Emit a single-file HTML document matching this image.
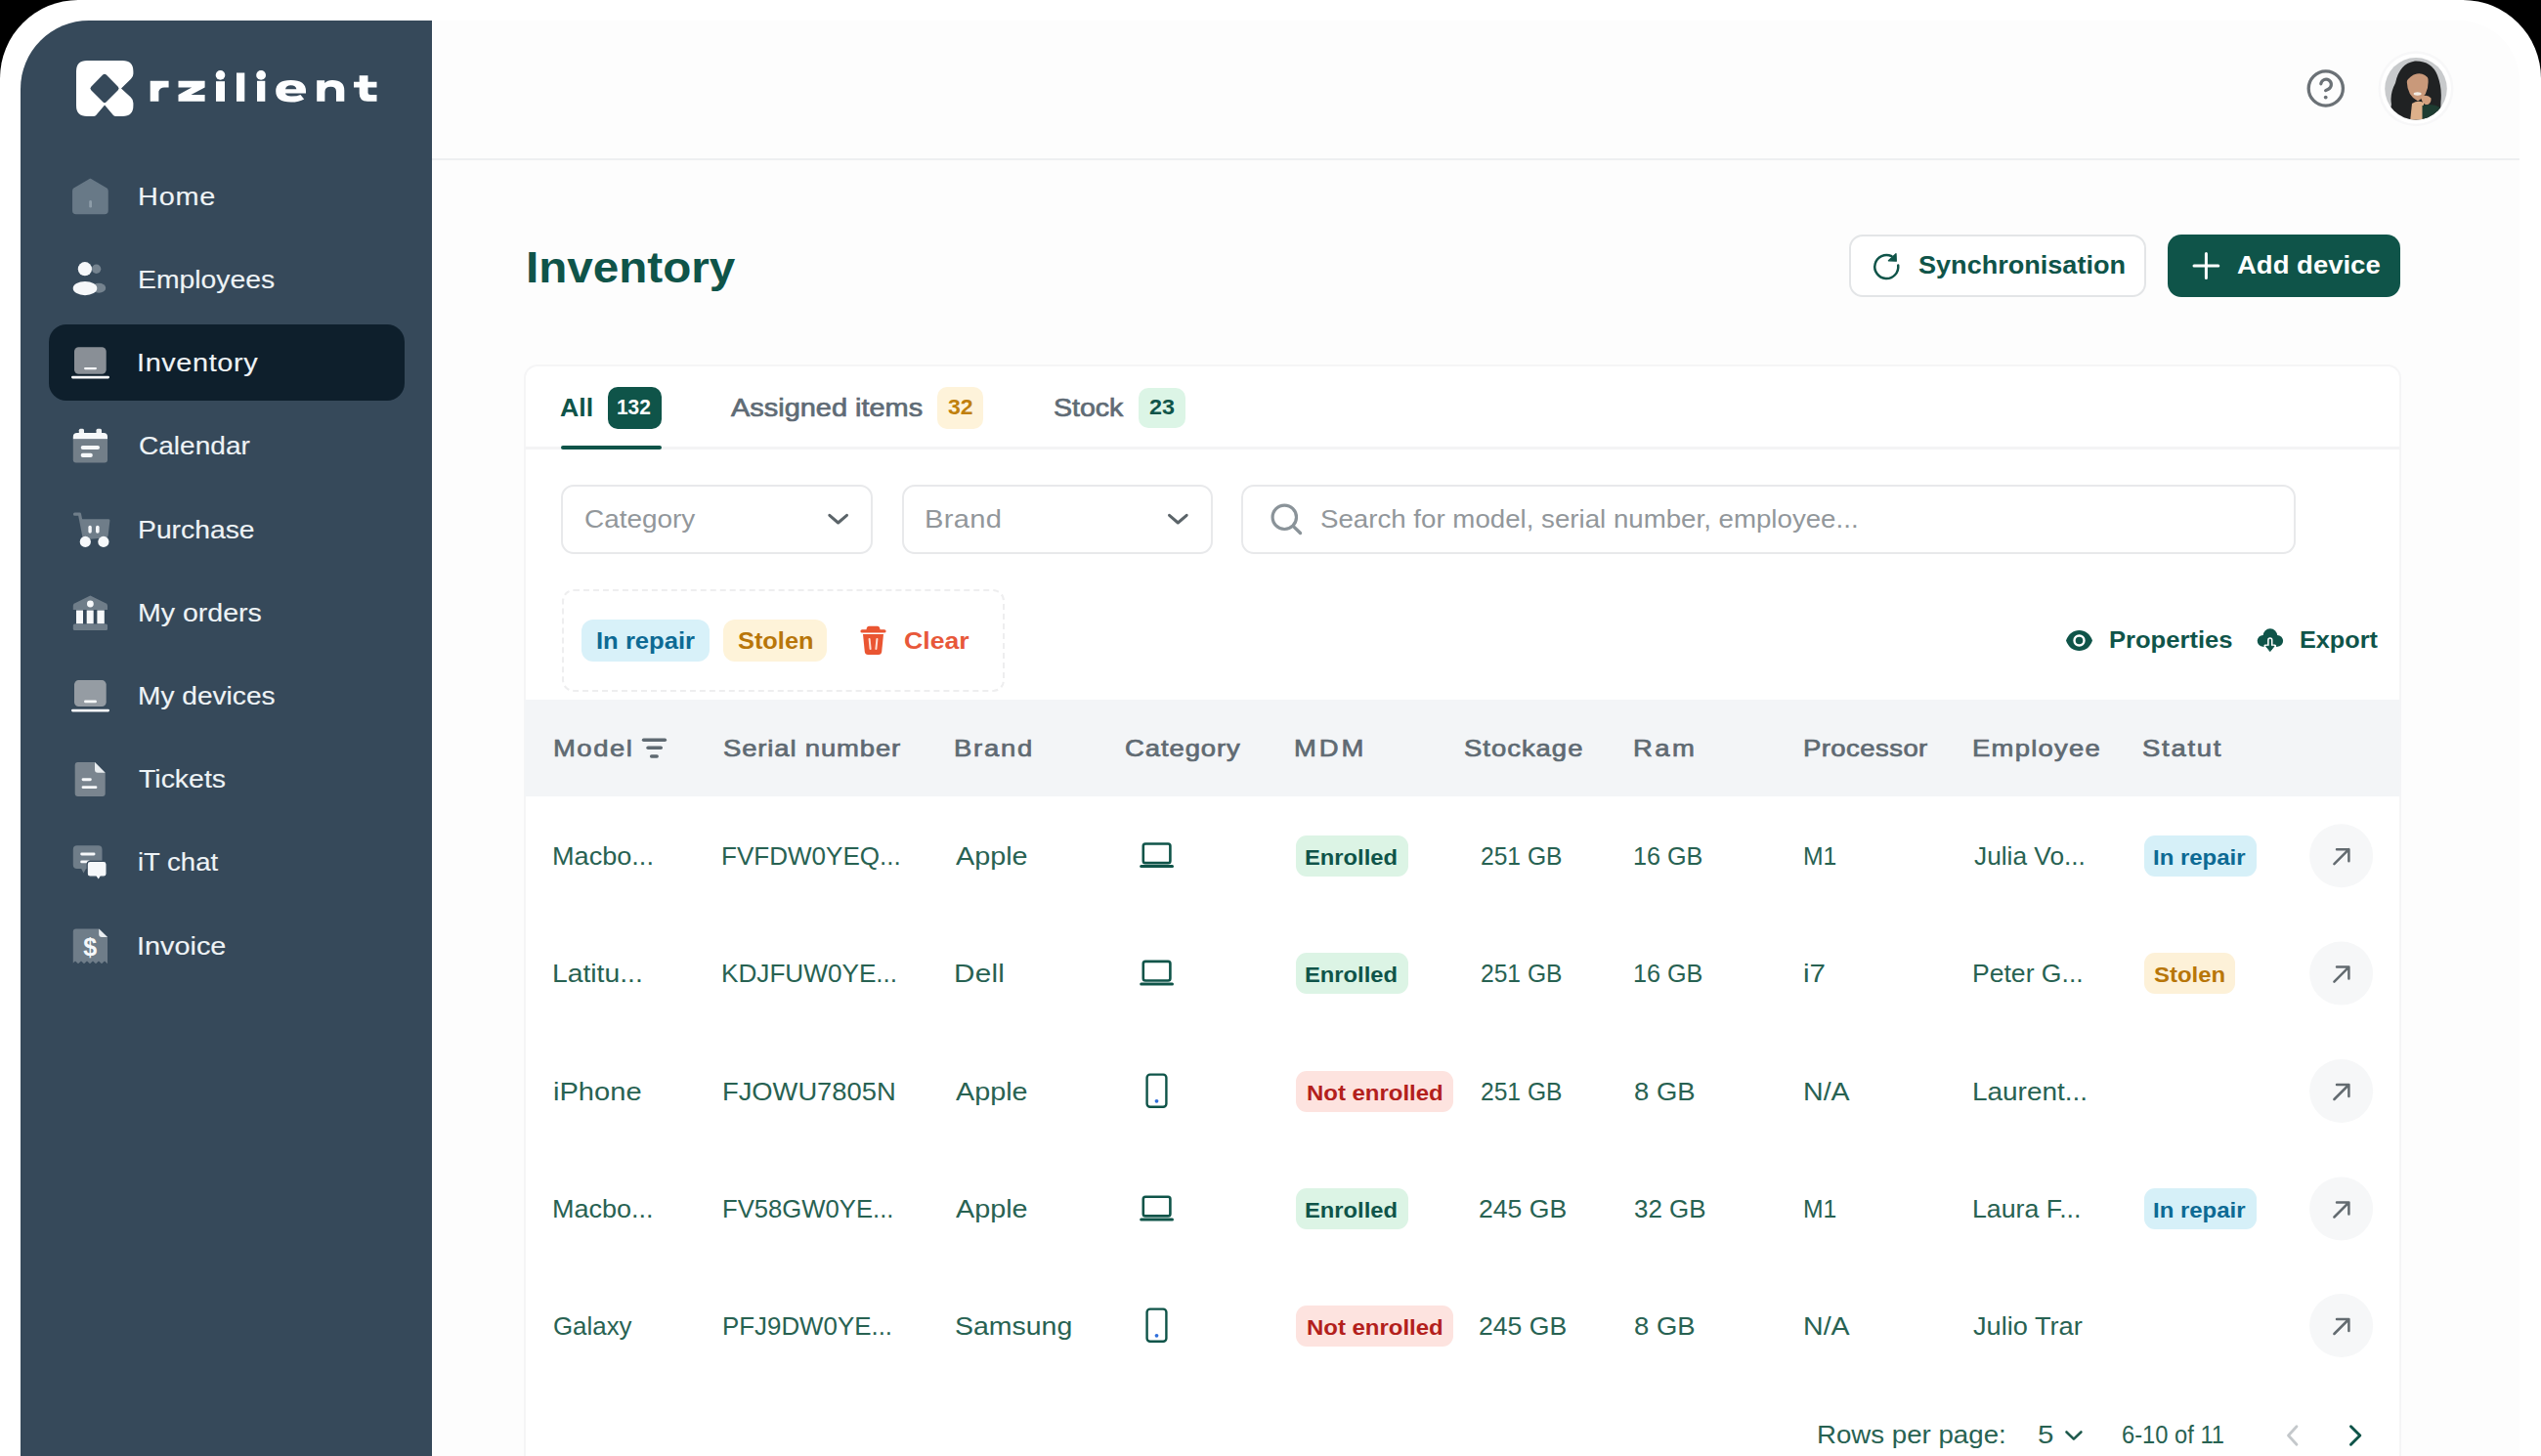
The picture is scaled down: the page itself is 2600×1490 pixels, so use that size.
<!DOCTYPE html>
<html><head><meta charset="utf-8">
<style>
*{margin:0;padding:0;box-sizing:border-box}
html,body{width:2600px;height:1490px;overflow:hidden;background:#000}
body{font-family:"Liberation Sans",sans-serif;position:relative}
.abs{position:absolute}
.t{position:absolute;white-space:nowrap;line-height:1}
svg{position:absolute;overflow:visible}
</style></head>
<body>
<div class="abs" style="left:0;top:0;width:2600px;height:1490px;background:#fff;border-radius:80px 80px 0 0"></div>
<div class="abs" style="left:21px;top:21px;width:421px;height:1469px;background:#36495a;border-radius:70px 0 0 0"></div>
<div class="abs" style="left:442px;top:21px;width:2136px;height:1469px;background:#fdfdfd;border-radius:0 62px 0 0"></div>

<!-- active nav -->
<div class="abs" style="left:50px;top:332px;width:364px;height:78px;background:#0e1f2c;border-radius:18px"></div>

<!-- header line -->
<div class="abs" style="left:442px;top:161.5px;width:2136px;height:2px;background:#eeeff1"></div>

<!-- buttons -->
<div class="abs" style="left:1892px;top:240px;width:304px;height:64px;border:2px solid #e3e5e7;border-radius:14px;background:#fff"></div>
<div class="abs" style="left:2218px;top:240px;width:238px;height:64px;border-radius:14px;background:#0f5449"></div>

<!-- card -->
<div class="abs" style="left:536px;top:373px;width:1921px;height:1117px;background:#fff;border:2px solid #f5f5f6;border-bottom:none;border-radius:14px 14px 0 0"></div>
<!-- tab divider -->
<div class="abs" style="left:537px;top:456.5px;width:1919px;height:3.5px;background:#f4f4f5"></div>
<div class="abs" style="left:574px;top:456.2px;width:102.5px;height:4px;background:#0f5449;border-radius:2px"></div>
<!-- tab badges -->
<div class="abs" style="left:621.5px;top:396px;width:55px;height:42.5px;background:#0f5449;border-radius:10px"></div>
<div class="abs" style="left:959px;top:396px;width:47px;height:42.5px;background:#fef3da;border-radius:10px"></div>
<div class="abs" style="left:1165px;top:396.5px;width:47.7px;height:41.5px;background:#dcf5e6;border-radius:10px"></div>

<!-- filter boxes -->
<div class="abs" style="left:574px;top:496px;width:319px;height:71px;border:2px solid #e8e9eb;border-radius:13px;background:#fff"></div>
<div class="abs" style="left:922.6px;top:496px;width:318px;height:71px;border:2px solid #e8e9eb;border-radius:13px;background:#fff"></div>
<div class="abs" style="left:1270px;top:496px;width:1078.5px;height:71px;border:2px solid #e8e9eb;border-radius:13px;background:#fff"></div>

<!-- dashed box -->
<div class="abs" style="left:575px;top:603px;width:452.5px;height:105px;border:2px dashed #eeeeef;border-radius:12px"></div>
<div class="abs" style="left:595.2px;top:634.4px;width:131.2px;height:42.3px;background:#d8f1f9;border-radius:12px"></div>
<div class="abs" style="left:740.4px;top:634.4px;width:106.1px;height:42.3px;background:#fef3d9;border-radius:12px"></div>

<!-- table header -->
<div class="abs" style="left:537px;top:715.6px;width:1919px;height:99.4px;background:#f3f5f7"></div>

<div class="abs" style="left:1326px;top:854.7px;width:115px;height:42px;background:#dcf4e5;border-radius:11px"></div>
<div class="abs" style="left:2194px;top:854.7px;width:115px;height:42px;background:#d6f0f8;border-radius:11px"></div>
<div class="abs" style="left:1326px;top:975.1px;width:115px;height:42px;background:#dcf4e5;border-radius:11px"></div>
<div class="abs" style="left:2193.5px;top:975.1px;width:93.69999999999982px;height:42px;background:#fdf1d8;border-radius:11px"></div>
<div class="abs" style="left:1325.5px;top:1095.5px;width:161.0px;height:42px;background:#fde3df;border-radius:11px"></div>
<div class="abs" style="left:1326px;top:1216.0px;width:115px;height:42px;background:#dcf4e5;border-radius:11px"></div>
<div class="abs" style="left:2194px;top:1216.0px;width:115px;height:42px;background:#d6f0f8;border-radius:11px"></div>
<div class="abs" style="left:1325.5px;top:1335.5px;width:161.0px;height:42px;background:#fde3df;border-radius:11px"></div>

<svg style="left:0;top:0" width="2600" height="1490" viewBox="0 0 2600 1490">
  <!-- logo -->
  <g transform="translate(72 56)">
    <path d="M6 17 Q6 6 17 6 H53.4 Q64.4 6 64.4 17 V19.5 Q64.4 22.6 62 24.8 L52 34.4 L61.8 43.6 Q64.4 46 64.4 49.5 V52 Q64.4 63 53.4 63 H46.5 Q45 63 44 62 L35.1 51.6 L26.2 62 Q25.2 63 23.7 63 H17 Q6 63 6 52 Z" fill="#fff"/>
    <polygon points="35,22.3 47,34.4 35,46.5 23,34.4" fill="#36495a" stroke="#36495a" stroke-width="5" stroke-linejoin="round"/>
  </g>

  <!-- logo text -->
  <g fill="#fdfeff">
    <path d="M153.7 103.8 V82.8 H172.6 V89.6 H168 Q163.8 89.6 162.4 93.5 V103.8 Z"/>
    <path d="M182.5 82.8 H209.6 V89.4 L195.4 96.9 H209.6 V103.8 H182.5 V96.9 L196.2 89.4 H182.5 Z"/>
    <rect x="221" y="83.2" width="9" height="20.6"/>
    <circle cx="225.5" cy="76.9" r="4.8"/>
    <rect x="242" y="74.5" width="8.3" height="29.3"/>
    <rect x="263" y="82.8" width="8.3" height="21"/>
    <circle cx="267.1" cy="76.9" r="4.9"/>
    <path fill-rule="evenodd" d="M313 95.5 H291.8 Q293 98.5 298 98.5 Q304 98.5 307.5 97 L311.2 101.5 Q306 104.6 297.8 104.6 Q282.2 104.6 282.2 93.3 Q282.2 82 297.6 82 Q313 82 313 93.3 Z M292 91.2 H303.4 Q302.6 87.2 297.7 87.2 Q292.8 87.2 292 91.2 Z"/>
    <path d="M324.2 103.7 V82.2 H332.2 V85 Q335 82 340 82 Q352.3 82 352.3 92.5 V103.7 H344 V93.5 Q344 88.8 338.6 88.8 Q332.4 88.8 332.4 94 V103.7 Z"/>
    <path d="M367.7 77.2 H376.5 V83.8 H385.5 V89.4 H376.5 V95 Q376.5 97 379 97 H385.5 V103.7 H376 Q367.7 103.7 367.7 95.5 V89.4 H362 V83.8 H367.7 Z"/>
  </g>
  <!-- home -->
  <path d="M92.4 183.5 L109 193.2 Q110 194 110 195.5 V215.6 Q110 218.6 107 218.6 H77.8 Q74.8 218.6 74.8 215.6 V195.5 Q74.8 194 75.8 193.2 Z" fill="#687987" stroke="#687987" stroke-width="1.5" stroke-linejoin="round"/>
  <rect x="91.2" y="205" width="2.8" height="7.6" rx="1.4" fill="#8d9ca8"/>
  <!-- employees -->
  <circle cx="98.6" cy="275.2" r="4.7" fill="#75838f"/>
  <ellipse cx="101.2" cy="294.8" rx="7" ry="5" fill="#75838f"/>
  <circle cx="86.9" cy="275.2" r="7.1" fill="#f6f8fa"/>
  <ellipse cx="87" cy="295.1" rx="12.3" ry="7.1" fill="#f6f8fa"/>
  <!-- inventory -->
  <rect x="76" y="355.3" width="32.7" height="27.4" rx="4.5" fill="#898f96"/>
  <rect x="86" y="376" width="13" height="2.2" rx="1.1" fill="#f6f8fa"/>
  <rect x="73" y="384.8" width="39" height="2.6" rx="1.3" fill="#f6f8fa"/>
  <!-- calendar -->
  <rect x="80.8" y="438.8" width="5.2" height="6" rx="1.5" fill="#eef1f3"/>
  <rect x="98.5" y="438.8" width="5.5" height="6" rx="1.5" fill="#eef1f3"/>
  <path d="M74.8 447 Q74.8 443 78.8 443 H106 Q110 443 110 447 V449.5 H74.8 Z" fill="#f6f8fa"/>
  <path d="M74.8 449.5 H110 V470.6 Q110 473.6 107 473.6 H77.8 Q74.8 473.6 74.8 470.6 Z" fill="#737f89"/>
  <rect x="82.7" y="456" width="19.3" height="4" rx="2" fill="#f6f8fa"/>
  <rect x="82.7" y="463.8" width="12.1" height="4.2" rx="2" fill="#f6f8fa"/>
  <!-- purchase -->
  <path d="M76.5 526.2 H81.5 L86.5 552" fill="none" stroke="#6f7d89" stroke-width="3.2" stroke-linecap="round" stroke-linejoin="round"/>
  <path d="M82.3 531.3 H111.2 Q112.6 531.3 112.4 532.8 L110.6 548.2 Q110.4 550 108.6 550.2 L86.5 552.3 Z" fill="#6f7d89"/>
  <rect x="90.4" y="537.7" width="3.4" height="8" rx="1.7" fill="#f6f8fa"/>
  <rect x="98" y="537.7" width="3.6" height="8" rx="1.8" fill="#f6f8fa"/>
  <circle cx="87.3" cy="554.4" r="5.6" fill="#f6f8fa"/>
  <circle cx="105.9" cy="554.4" r="5.6" fill="#f6f8fa"/>
  <!-- my orders -->
  <path d="M92.4 609.6 L108.6 617.6 Q110 618.3 110 620 V624 H74.8 V620 Q74.8 618.3 76.2 617.6 Z" fill="#6f7d89"/>
  <circle cx="92.4" cy="618" r="3.4" fill="#f6f8fa"/>
  <rect x="78" y="624.5" width="7" height="13.9" fill="#f6f8fa"/>
  <rect x="88.7" y="624.5" width="7" height="13.9" fill="#f6f8fa"/>
  <rect x="99.4" y="624.5" width="7.4" height="13.9" fill="#f6f8fa"/>
  <rect x="74.8" y="638.4" width="35.2" height="6.5" rx="1.5" fill="#6f7d89"/>
  <!-- my devices -->
  <rect x="76" y="696.1" width="32.7" height="26.9" rx="4.5" fill="#959ca3"/>
  <rect x="86" y="716.5" width="13" height="2.8" rx="1.4" fill="#f6f8fa"/>
  <rect x="73" y="725.8" width="39" height="2.6" rx="1.3" fill="#f6f8fa"/>
  <!-- tickets -->
  <path d="M79.7 780 H97 L107.7 790.7 V811.9 Q107.7 814.9 104.7 814.9 H79.7 Q76.7 814.9 76.7 811.9 V783 Q76.7 780 79.7 780 Z" fill="#7a858f"/>
  <path d="M97 780 L107.7 790.7 H100 Q97 790.7 97 787.7 Z" fill="#e9edf0"/>
  <rect x="83.6" y="796.3" width="10.2" height="2.9" rx="1.45" fill="#f6f8fa"/>
  <rect x="83.6" y="804.2" width="15.8" height="2.9" rx="1.45" fill="#f6f8fa"/>
  <!-- it chat -->
  <path d="M78.8 865.2 H100.5 Q104.5 865.2 104.5 869.2 V884.9 Q104.5 888.9 100.5 888.9 H88 L85.5 893.5 L83.2 888.9 H78.8 Q74.8 888.9 74.8 884.9 V869.2 Q74.8 865.2 78.8 865.2 Z" fill="#6f7d89"/>
  <rect x="82.2" y="872.6" width="15.3" height="2.8" rx="1.4" fill="#f6f8fa"/>
  <rect x="82.2" y="880.5" width="9.8" height="2.8" rx="1.4" fill="#f6f8fa"/>
  <path d="M92.2 881.4 H106.1 Q109.1 881.4 109.1 884.4 V894.2 Q109.1 897.2 106.1 897.2 H103 L100.8 900.6 L98.2 897.2 H92.2 Q89.2 897.2 89.2 894.2 V884.4 Q89.2 881.4 92.2 881.4 Z" fill="#f6f8fa" stroke="#36495a" stroke-width="1.2"/>
  <!-- invoice -->
  <path d="M77.8 950.5 H101.2 L110 958.9 V986.3 L107 983.6 L104 986.3 L101 983.6 L98 986.3 L95 983.6 L92 986.3 L89 983.6 L86 986.3 L83 983.6 L80 986.3 L77 983.6 L74.8 985.6 V953.5 Q74.8 950.5 77.8 950.5 Z" fill="#6f7d89"/>
  <path d="M101.2 950.5 L110 958.9 H104.2 Q101.2 958.9 101.2 955.9 Z" fill="#e9edf0"/>
  <text x="92.3" y="977.5" font-family="Liberation Sans" font-weight="bold" font-size="25" fill="#f6f8fa" text-anchor="middle">$</text>

  <!-- help icon -->
  <circle cx="2379.8" cy="90.5" r="17.6" fill="none" stroke="#6b7176" stroke-width="3.3"/>
  <path d="M2374.8 85.8 A5.3 5.3 0 1 1 2382.4 91.2 L2379.6 92.6" fill="none" stroke="#6b7176" stroke-width="3.2" stroke-linecap="round" stroke-linejoin="round"/>
  <circle cx="2379.7" cy="99.6" r="1.9" fill="#6b7176"/>
  <!-- avatar -->
  <circle cx="2472" cy="90.8" r="38.5" fill="#f7f7f8"/>
  <circle cx="2472" cy="90.8" r="36" fill="#ffffff"/>
  <clipPath id="av"><circle cx="2472" cy="90.8" r="31.8"/></clipPath>
  <g clip-path="url(#av)">
    <rect x="2438" y="57" width="68" height="68" fill="#c8cacc"/>
    <path d="M2447 107 Q2445 96 2451 85 Q2455 65 2471 62.5 Q2488 62 2494 77 Q2499 90 2497.5 104 L2497 125 L2443 125 Z" fill="#202223"/>
    <path d="M2462.8 84 Q2462.5 71 2474 71 Q2485 71.5 2484.6 84 Q2484.5 98 2474 103.5 Q2463.2 98 2462.8 84 Z" fill="#c9997a"/>
    <path d="M2462 80 Q2464 68 2476 68 Q2487 69 2486 82 Q2481 74 2473 75.5 Q2466 77 2462 84 Z" fill="#202223"/>
    <ellipse cx="2473.6" cy="96" rx="4" ry="1.7" fill="#f2ece3"/>
    <path d="M2477 99 Q2484 96 2487.5 100.5 Q2488 106 2483 107.5 Q2478 106 2477 99 Z" fill="#d2a07e"/>
    <path d="M2468 106 Q2474 102 2480 105 L2480 125 H2466 Z" fill="#ddb08a"/>
    <path d="M2478.5 108 Q2489 105 2497 110 L2500 125 H2478.5 Z" fill="#1e3c31"/>
  </g>
  <!-- sync icon -->
  <path d="M1942.2 271.5 A12 12 0 1 1 1935.5 262.2" fill="none" stroke="#0f5449" stroke-width="2.5" stroke-linecap="round"/>
  <path d="M1940 259.6 L1940.3 267.2 L1932.4 266.8 Z" fill="#0f5449" stroke="#0f5449" stroke-width="1.3" stroke-linejoin="round"/>
  <!-- plus -->
  <path d="M2257.4 259.5 V284.5 M2245 272 H2269.8" stroke="#fff" stroke-width="3" stroke-linecap="round"/>

  <!-- chevrons -->
  <path d="M848.8 527.3 L857.6 535 L866.5 527.3" fill="none" stroke="#5b6469" stroke-width="3" stroke-linecap="round" stroke-linejoin="round"/>
  <path d="M1196.5 527.3 L1205.3 535 L1214.2 527.3" fill="none" stroke="#5b6469" stroke-width="3" stroke-linecap="round" stroke-linejoin="round"/>
  <!-- search -->
  <circle cx="1314.3" cy="529.3" r="12.2" fill="none" stroke="#8a9399" stroke-width="3.2"/>
  <path d="M1323.4 538.6 L1330.5 545.5" stroke="#8a9399" stroke-width="3.4" stroke-linecap="round"/>

  <!-- trash -->
  <path d="M886.5 645 Q886.5 640.8 889.5 640.8 H897.5 Q900.5 640.8 900.5 645" fill="#ea5532"/>
  <rect x="880.4" y="644.2" width="26.2" height="3.4" rx="1.7" fill="#ea5532"/>
  <path d="M883 649 H904 L902.2 667 Q901.8 670 898.8 670 H888.2 Q885.2 670 884.8 667 Z" fill="#ea5532"/>
  <path d="M889.6 654 L890.6 664 M897.4 654 L896.4 664" stroke="#fde0d6" stroke-width="2" stroke-linecap="round"/>

  <!-- eye -->
  <path d="M2114 655.5 C2116.5 648.5 2121.5 645 2127.5 645 C2133.5 645 2138.5 648.5 2141 655.5 C2138.5 662.5 2133.5 666 2127.5 666 C2121.5 666 2116.5 662.5 2114 655.5 Z" fill="#0f5449"/>
  <circle cx="2127.5" cy="655.5" r="5" fill="none" stroke="#fff" stroke-width="2.4"/>
  <!-- export cloud -->
  <g fill="#0f5449">
    <circle cx="2315.6" cy="655.8" r="5.9"/>
    <circle cx="2322.9" cy="650.6" r="7.3"/>
    <circle cx="2330.2" cy="655.8" r="5.9"/>
    <rect x="2315.6" y="651" width="14.6" height="10.8"/>
  </g>
  <path d="M2322.8 655 V662.5" stroke="#fff" stroke-width="5.4" stroke-linecap="round"/>
  <path d="M2318 661 H2327.6 L2322.8 666.8 Z" fill="#fff" stroke="#fff" stroke-width="3.2" stroke-linejoin="round"/>
  <path d="M2322.8 655 V662.5" stroke="#0f5449" stroke-width="2.3" stroke-linecap="round"/>
  <path d="M2318.6 661.3 H2327 L2322.8 666.6 Z" fill="#0f5449" stroke="#0f5449" stroke-width="1" stroke-linejoin="round"/>
  <!-- header filter icon -->
  <rect x="656.8" y="755.4" width="25.3" height="3.5" rx="1.75" fill="#5f6a72"/>
  <rect x="661.3" y="763.5" width="16.7" height="3.5" rx="1.75" fill="#5f6a72"/>
  <rect x="664.9" y="772.2" width="9" height="3.5" rx="1.75" fill="#5f6a72"/>

  <rect x="1169.8" y="863.5" width="27.6" height="19.6" rx="2.2" fill="none" stroke="#0f5449" stroke-width="2.6"/><rect x="1166.1999999999998" y="885.1" width="34.8" height="3" rx="1.5" fill="#0f5449"/><circle cx="2395.6" cy="875.7" r="32.5" fill="#f6f7f8"/><path d="M2388.4 884.2 L2403.4 869.2 M2391 869.2 H2403.4 V881.2" fill="none" stroke="#636b70" stroke-width="2.5" stroke-linecap="round" stroke-linejoin="round"/><rect x="1169.8" y="983.9" width="27.6" height="19.6" rx="2.2" fill="none" stroke="#0f5449" stroke-width="2.6"/><rect x="1166.1999999999998" y="1005.5" width="34.8" height="3" rx="1.5" fill="#0f5449"/><circle cx="2395.6" cy="996.1" r="32.5" fill="#f6f7f8"/><path d="M2388.4 1004.6 L2403.4 989.6 M2391 989.6 H2403.4 V1001.6" fill="none" stroke="#636b70" stroke-width="2.5" stroke-linecap="round" stroke-linejoin="round"/><rect x="1173.6" y="1099.6000000000001" width="19.8" height="33.2" rx="3.2" fill="none" stroke="#0f5449" stroke-width="2.4"/><circle cx="1183.5" cy="1126.8" r="1.9" fill="#2f6fdb"/><circle cx="2395.6" cy="1116.5" r="32.5" fill="#f6f7f8"/><path d="M2388.4 1125.0 L2403.4 1110.0 M2391 1110.0 H2403.4 V1122.0" fill="none" stroke="#636b70" stroke-width="2.5" stroke-linecap="round" stroke-linejoin="round"/><rect x="1169.8" y="1224.8" width="27.6" height="19.6" rx="2.2" fill="none" stroke="#0f5449" stroke-width="2.6"/><rect x="1166.1999999999998" y="1246.4" width="34.8" height="3" rx="1.5" fill="#0f5449"/><circle cx="2395.6" cy="1237.0" r="32.5" fill="#f6f7f8"/><path d="M2388.4 1245.5 L2403.4 1230.5 M2391 1230.5 H2403.4 V1242.5" fill="none" stroke="#636b70" stroke-width="2.5" stroke-linecap="round" stroke-linejoin="round"/><rect x="1173.6" y="1339.6000000000001" width="19.8" height="33.2" rx="3.2" fill="none" stroke="#0f5449" stroke-width="2.4"/><circle cx="1183.5" cy="1366.8" r="1.9" fill="#2f6fdb"/><circle cx="2395.6" cy="1356.5" r="32.5" fill="#f6f7f8"/><path d="M2388.4 1365.0 L2403.4 1350.0 M2391 1350.0 H2403.4 V1362.0" fill="none" stroke="#636b70" stroke-width="2.5" stroke-linecap="round" stroke-linejoin="round"/>

  <!-- pagination chevrons -->
  <path d="M2114.5 1465.5 L2121.9 1472.6 L2129.4 1465.5" fill="none" stroke="#1f5a4d" stroke-width="2.6" stroke-linecap="round" stroke-linejoin="round"/>
  <path d="M2350 1459.8 L2341.5 1469 L2350 1478.2" fill="none" stroke="#c4c8cb" stroke-width="2.8" stroke-linecap="round" stroke-linejoin="round"/>
  <path d="M2405.5 1459.8 L2414.8 1469 L2405.5 1478.2" fill="none" stroke="#0f5449" stroke-width="3" stroke-linecap="round" stroke-linejoin="round"/>
</svg>

<div class="t" style="left:140.76px;top:188.66px;font-size:25.8px;color:#eef3f6;letter-spacing:0.702px;transform:scaleX(1.1200);transform-origin:0 0;-webkit-text-stroke:0.12px #eef3f6;">Home</div>
<div class="t" style="left:140.80px;top:273.88px;font-size:25.8px;color:#eef3f6;letter-spacing:0.000px;transform:scaleX(1.0982);transform-origin:0 0;-webkit-text-stroke:0.12px #eef3f6;">Employees</div>
<div class="t" style="left:140.48px;top:359.10px;font-size:25.8px;color:#eef3f6;letter-spacing:0.536px;transform:scaleX(1.1200);transform-origin:0 0;-webkit-text-stroke:0.12px #eef3f6;">Inventory</div>
<div class="t" style="left:141.64px;top:444.32px;font-size:25.8px;color:#eef3f6;letter-spacing:0.000px;transform:scaleX(1.0874);transform-origin:0 0;-webkit-text-stroke:0.12px #eef3f6;">Calendar</div>
<div class="t" style="left:140.81px;top:529.54px;font-size:25.8px;color:#eef3f6;letter-spacing:0.000px;transform:scaleX(1.0972);transform-origin:0 0;-webkit-text-stroke:0.12px #eef3f6;">Purchase</div>
<div class="t" style="left:140.79px;top:614.76px;font-size:25.8px;color:#eef3f6;letter-spacing:-0.000px;transform:scaleX(1.1060);transform-origin:0 0;-webkit-text-stroke:0.12px #eef3f6;">My orders</div>
<div class="t" style="left:140.82px;top:699.98px;font-size:25.8px;color:#eef3f6;letter-spacing:0.000px;transform:scaleX(1.0899);transform-origin:0 0;-webkit-text-stroke:0.12px #eef3f6;">My devices</div>
<div class="t" style="left:142.45px;top:785.20px;font-size:25.8px;color:#eef3f6;letter-spacing:0.000px;transform:scaleX(1.1028);transform-origin:0 0;-webkit-text-stroke:0.12px #eef3f6;">Tickets</div>
<div class="t" style="left:141.13px;top:870.42px;font-size:25.8px;color:#eef3f6;letter-spacing:0.000px;transform:scaleX(1.0667);transform-origin:0 0;-webkit-text-stroke:0.12px #eef3f6;">iT chat</div>
<div class="t" style="left:140.48px;top:955.64px;font-size:25.8px;color:#eef3f6;letter-spacing:0.000px;transform:scaleX(1.1185);transform-origin:0 0;-webkit-text-stroke:0.12px #eef3f6;">Invoice</div>
<div class="t" style="left:537.81px;top:250.88px;font-size:44.8px;font-weight:bold;color:#0f5449;letter-spacing:0.000px;transform:scaleX(1.0630);transform-origin:0 0;">Inventory</div>
<div class="t" style="left:1963.23px;top:258.27px;font-size:26.5px;font-weight:bold;color:#0f5449;letter-spacing:0.000px;transform:scaleX(1.0212);transform-origin:0 0;">Synchronisation</div>
<div class="t" style="left:2288.62px;top:258.27px;font-size:26.5px;font-weight:bold;color:#ffffff;letter-spacing:0.000px;transform:scaleX(1.0376);transform-origin:0 0;">Add device</div>
<div class="t" style="left:573.14px;top:403.97px;font-size:26.5px;font-weight:bold;color:#0f5449;letter-spacing:0.000px;transform:scaleX(1.0080);transform-origin:0 0;">All</div>
<div class="t" style="left:631.01px;top:406.35px;font-size:22.5px;font-weight:bold;color:#ffffff;letter-spacing:0.000px;transform:scaleX(0.9277);transform-origin:0 0;">132</div>
<div class="t" style="left:748.40px;top:403.97px;font-size:26.5px;color:#5f6b75;letter-spacing:0.000px;transform:scaleX(1.0915);transform-origin:0 0;-webkit-text-stroke:0.7px #5f6b75;">Assigned items</div>
<div class="t" style="left:970.19px;top:406.35px;font-size:22.5px;font-weight:bold;color:#c07f0c;letter-spacing:-0.000px;transform:scaleX(1.0232);transform-origin:0 0;">32</div>
<div class="t" style="left:1077.65px;top:403.87px;font-size:26.5px;color:#5f6b75;letter-spacing:0.000px;transform:scaleX(1.0769);transform-origin:0 0;-webkit-text-stroke:0.7px #5f6b75;">Stock</div>
<div class="t" style="left:1175.82px;top:406.15px;font-size:22.5px;font-weight:bold;color:#0f5449;letter-spacing:0.000px;transform:scaleX(1.0383);transform-origin:0 0;">23</div>
<div class="t" style="left:598.16px;top:518.19px;font-size:26px;color:#92979b;letter-spacing:0.000px;transform:scaleX(1.0743);transform-origin:0 0;">Category</div>
<div class="t" style="left:945.76px;top:518.19px;font-size:26px;color:#92979b;letter-spacing:0.304px;transform:scaleX(1.1200);transform-origin:0 0;">Brand</div>
<div class="t" style="left:1350.67px;top:518.49px;font-size:26px;color:#92979b;letter-spacing:0.000px;transform:scaleX(1.0642);transform-origin:0 0;">Search for model, serial number, employee...</div>
<div class="t" style="left:609.70px;top:643.98px;font-size:24px;font-weight:bold;color:#0d6a94;letter-spacing:0.000px;transform:scaleX(1.0674);transform-origin:0 0;">In repair</div>
<div class="t" style="left:755.21px;top:643.98px;font-size:24px;font-weight:bold;color:#b87609;letter-spacing:0.000px;transform:scaleX(1.0568);transform-origin:0 0;">Stolen</div>
<div class="t" style="left:924.89px;top:643.98px;font-size:24px;font-weight:bold;color:#e8583a;letter-spacing:0.000px;transform:scaleX(1.1098);transform-origin:0 0;">Clear</div>
<div class="t" style="left:2157.57px;top:643.81px;font-size:23.5px;font-weight:bold;color:#0f5449;letter-spacing:0.000px;transform:scaleX(1.0877);transform-origin:0 0;">Properties</div>
<div class="t" style="left:2353.19px;top:643.81px;font-size:23.5px;font-weight:bold;color:#0f5449;letter-spacing:0.000px;transform:scaleX(1.0731);transform-origin:0 0;">Export</div>
<div class="t" style="left:565.76px;top:753.76px;font-size:24.5px;color:#5f6a72;letter-spacing:1.348px;transform:scaleX(1.1200);transform-origin:0 0;-webkit-text-stroke:0.7px #5f6a72;">Model</div>
<div class="t" style="left:739.60px;top:753.76px;font-size:24.5px;color:#5f6a72;letter-spacing:0.771px;transform:scaleX(1.1200);transform-origin:0 0;-webkit-text-stroke:0.7px #5f6a72;">Serial number</div>
<div class="t" style="left:976.26px;top:753.76px;font-size:24.5px;color:#5f6a72;letter-spacing:1.594px;transform:scaleX(1.1200);transform-origin:0 0;-webkit-text-stroke:0.7px #5f6a72;">Brand</div>
<div class="t" style="left:1150.60px;top:753.76px;font-size:24.5px;color:#5f6a72;letter-spacing:0.824px;transform:scaleX(1.1200);transform-origin:0 0;-webkit-text-stroke:0.7px #5f6a72;">Category</div>
<div class="t" style="left:1323.56px;top:753.76px;font-size:24.5px;color:#5f6a72;letter-spacing:2.571px;transform:scaleX(1.1200);transform-origin:0 0;-webkit-text-stroke:0.7px #5f6a72;">MDM</div>
<div class="t" style="left:1497.90px;top:753.76px;font-size:24.5px;color:#5f6a72;letter-spacing:0.890px;transform:scaleX(1.1200);transform-origin:0 0;-webkit-text-stroke:0.7px #5f6a72;">Stockage</div>
<div class="t" style="left:1670.56px;top:753.76px;font-size:24.5px;color:#5f6a72;letter-spacing:2.161px;transform:scaleX(1.1200);transform-origin:0 0;-webkit-text-stroke:0.7px #5f6a72;">Ram</div>
<div class="t" style="left:1844.76px;top:753.76px;font-size:24.5px;color:#5f6a72;letter-spacing:0.417px;transform:scaleX(1.1200);transform-origin:0 0;-webkit-text-stroke:0.7px #5f6a72;">Processor</div>
<div class="t" style="left:2017.76px;top:753.76px;font-size:24.5px;color:#5f6a72;letter-spacing:1.117px;transform:scaleX(1.1200);transform-origin:0 0;-webkit-text-stroke:0.7px #5f6a72;">Employee</div>
<div class="t" style="left:2192.10px;top:753.76px;font-size:24.5px;color:#5f6a72;letter-spacing:1.557px;transform:scaleX(1.1200);transform-origin:0 0;-webkit-text-stroke:0.7px #5f6a72;">Statut</div>
<div class="t" style="left:565.10px;top:862.77px;font-size:26.5px;color:#286252;letter-spacing:0.000px;transform:scaleX(1.0227);transform-origin:0 0;">Macbo...</div>
<div class="t" style="left:738.49px;top:862.77px;font-size:26.5px;color:#286252;letter-spacing:0.000px;transform:scaleX(0.9825);transform-origin:0 0;">FVFDW0YEQ...</div>
<div class="t" style="left:978.20px;top:862.77px;font-size:26.5px;color:#286252;letter-spacing:0.000px;transform:scaleX(1.0857);transform-origin:0 0;">Apple</div>
<div class="t" style="left:1515.44px;top:862.77px;font-size:26.5px;color:#286252;letter-spacing:0.000px;transform:scaleX(0.9284);transform-origin:0 0;">251 GB</div>
<div class="t" style="left:1670.90px;top:862.77px;font-size:26.5px;color:#286252;letter-spacing:0.000px;transform:scaleX(0.9505);transform-origin:0 0;">16 GB</div>
<div class="t" style="left:1844.90px;top:862.77px;font-size:26.5px;color:#286252;letter-spacing:0.000px;transform:scaleX(0.9323);transform-origin:0 0;">M1</div>
<div class="t" style="left:2019.50px;top:862.77px;font-size:26.5px;color:#286252;letter-spacing:0.000px;transform:scaleX(0.9911);transform-origin:0 0;">Julia Vo...</div>
<div class="t" style="left:565.00px;top:983.17px;font-size:26.5px;color:#286252;letter-spacing:0.000px;transform:scaleX(1.0675);transform-origin:0 0;">Latitu...</div>
<div class="t" style="left:738.48px;top:983.17px;font-size:26.5px;color:#286252;letter-spacing:0.000px;transform:scaleX(0.9865);transform-origin:0 0;">KDJFUW0YE...</div>
<div class="t" style="left:975.98px;top:983.17px;font-size:26.5px;color:#286252;letter-spacing:0.220px;transform:scaleX(1.1200);transform-origin:0 0;">Dell</div>
<div class="t" style="left:1515.44px;top:983.17px;font-size:26.5px;color:#286252;letter-spacing:0.000px;transform:scaleX(0.9284);transform-origin:0 0;">251 GB</div>
<div class="t" style="left:1670.90px;top:983.17px;font-size:26.5px;color:#286252;letter-spacing:0.000px;transform:scaleX(0.9505);transform-origin:0 0;">16 GB</div>
<div class="t" style="left:1845.05px;top:983.17px;font-size:26.5px;color:#286252;letter-spacing:0.000px;transform:scaleX(1.1155);transform-origin:0 0;">i7</div>
<div class="t" style="left:2017.74px;top:983.17px;font-size:26.5px;color:#286252;letter-spacing:0.000px;transform:scaleX(1.0023);transform-origin:0 0;">Peter G...</div>
<div class="t" style="left:565.78px;top:1103.57px;font-size:26.5px;color:#286252;letter-spacing:-0.000px;transform:scaleX(1.0981);transform-origin:0 0;">iPhone</div>
<div class="t" style="left:739.18px;top:1103.57px;font-size:26.5px;color:#286252;letter-spacing:0.000px;transform:scaleX(1.0310);transform-origin:0 0;">FJOWU7805N</div>
<div class="t" style="left:978.20px;top:1103.57px;font-size:26.5px;color:#286252;letter-spacing:0.000px;transform:scaleX(1.0857);transform-origin:0 0;">Apple</div>
<div class="t" style="left:1515.44px;top:1103.57px;font-size:26.5px;color:#286252;letter-spacing:0.000px;transform:scaleX(0.9284);transform-origin:0 0;">251 GB</div>
<div class="t" style="left:1671.51px;top:1103.57px;font-size:26.5px;color:#286252;letter-spacing:-0.000px;transform:scaleX(1.0355);transform-origin:0 0;">8 GB</div>
<div class="t" style="left:1844.57px;top:1103.57px;font-size:26.5px;color:#286252;letter-spacing:0.000px;transform:scaleX(1.0778);transform-origin:0 0;">N/A</div>
<div class="t" style="left:2017.63px;top:1103.57px;font-size:26.5px;color:#286252;letter-spacing:-0.000px;transform:scaleX(1.0536);transform-origin:0 0;">Laurent...</div>
<div class="t" style="left:565.41px;top:1224.07px;font-size:26.5px;color:#286252;letter-spacing:0.000px;transform:scaleX(1.0196);transform-origin:0 0;">Macbo...</div>
<div class="t" style="left:739.32px;top:1224.07px;font-size:26.5px;color:#286252;letter-spacing:0.000px;transform:scaleX(0.9688);transform-origin:0 0;">FV58GW0YE...</div>
<div class="t" style="left:978.20px;top:1224.07px;font-size:26.5px;color:#286252;letter-spacing:0.000px;transform:scaleX(1.0857);transform-origin:0 0;">Apple</div>
<div class="t" style="left:1512.75px;top:1224.07px;font-size:26.5px;color:#286252;letter-spacing:0.000px;transform:scaleX(1.0029);transform-origin:0 0;">245 GB</div>
<div class="t" style="left:1671.82px;top:1224.07px;font-size:26.5px;color:#286252;letter-spacing:0.000px;transform:scaleX(0.9787);transform-origin:0 0;">32 GB</div>
<div class="t" style="left:1844.90px;top:1224.07px;font-size:26.5px;color:#286252;letter-spacing:0.000px;transform:scaleX(0.9323);transform-origin:0 0;">M1</div>
<div class="t" style="left:2017.73px;top:1224.07px;font-size:26.5px;color:#286252;letter-spacing:0.000px;transform:scaleX(1.0090);transform-origin:0 0;">Laura F...</div>
<div class="t" style="left:566.48px;top:1343.57px;font-size:26.5px;color:#286252;letter-spacing:0.000px;transform:scaleX(0.9760);transform-origin:0 0;">Galaxy</div>
<div class="t" style="left:739.30px;top:1343.57px;font-size:26.5px;color:#286252;letter-spacing:0.000px;transform:scaleX(0.9769);transform-origin:0 0;">PFJ9DW0YE...</div>
<div class="t" style="left:977.26px;top:1343.57px;font-size:26.5px;color:#286252;letter-spacing:0.000px;transform:scaleX(1.0743);transform-origin:0 0;">Samsung</div>
<div class="t" style="left:1512.75px;top:1343.57px;font-size:26.5px;color:#286252;letter-spacing:0.000px;transform:scaleX(1.0029);transform-origin:0 0;">245 GB</div>
<div class="t" style="left:1671.51px;top:1343.57px;font-size:26.5px;color:#286252;letter-spacing:-0.000px;transform:scaleX(1.0355);transform-origin:0 0;">8 GB</div>
<div class="t" style="left:1844.57px;top:1343.57px;font-size:26.5px;color:#286252;letter-spacing:0.000px;transform:scaleX(1.0778);transform-origin:0 0;">N/A</div>
<div class="t" style="left:2019.49px;top:1343.57px;font-size:26.5px;color:#286252;letter-spacing:0.000px;transform:scaleX(1.0254);transform-origin:0 0;">Julio Trar</div>
<div class="t" style="left:1335.38px;top:866.88px;font-size:22px;font-weight:bold;color:#0f5449;letter-spacing:0.000px;transform:scaleX(1.0800);transform-origin:0 0;">Enrolled</div>
<div class="t" style="left:2203.37px;top:866.88px;font-size:22px;font-weight:bold;color:#0d6a94;letter-spacing:0.000px;transform:scaleX(1.0894);transform-origin:0 0;">In repair</div>
<div class="t" style="left:1335.38px;top:987.28px;font-size:22px;font-weight:bold;color:#0f5449;letter-spacing:0.000px;transform:scaleX(1.0800);transform-origin:0 0;">Enrolled</div>
<div class="t" style="left:2204.19px;top:987.28px;font-size:22px;font-weight:bold;color:#b87609;letter-spacing:0.000px;transform:scaleX(1.0862);transform-origin:0 0;">Stolen</div>
<div class="t" style="left:1336.57px;top:1107.68px;font-size:22px;font-weight:bold;color:#b3201c;letter-spacing:0.000px;transform:scaleX(1.0884);transform-origin:0 0;">Not enrolled</div>
<div class="t" style="left:1335.38px;top:1228.18px;font-size:22px;font-weight:bold;color:#0f5449;letter-spacing:0.000px;transform:scaleX(1.0800);transform-origin:0 0;">Enrolled</div>
<div class="t" style="left:2203.37px;top:1228.18px;font-size:22px;font-weight:bold;color:#0d6a94;letter-spacing:0.000px;transform:scaleX(1.0894);transform-origin:0 0;">In repair</div>
<div class="t" style="left:1336.57px;top:1347.68px;font-size:22px;font-weight:bold;color:#b3201c;letter-spacing:0.000px;transform:scaleX(1.0884);transform-origin:0 0;">Not enrolled</div>
<div class="t" style="left:1859.05px;top:1455.17px;font-size:26.5px;color:#286252;letter-spacing:0.000px;transform:scaleX(1.0436);transform-origin:0 0;">Rows per page:</div>
<div class="t" style="left:2085.39px;top:1455.17px;font-size:26.5px;color:#286252;letter-spacing:0.000px;transform:scaleX(1.1137);transform-origin:0 0;">5</div>
<div class="t" style="left:2171.38px;top:1455.17px;font-size:26.5px;color:#286252;letter-spacing:0.000px;transform:scaleX(0.8948);transform-origin:0 0;">6-10 of 11</div>
</body></html>
